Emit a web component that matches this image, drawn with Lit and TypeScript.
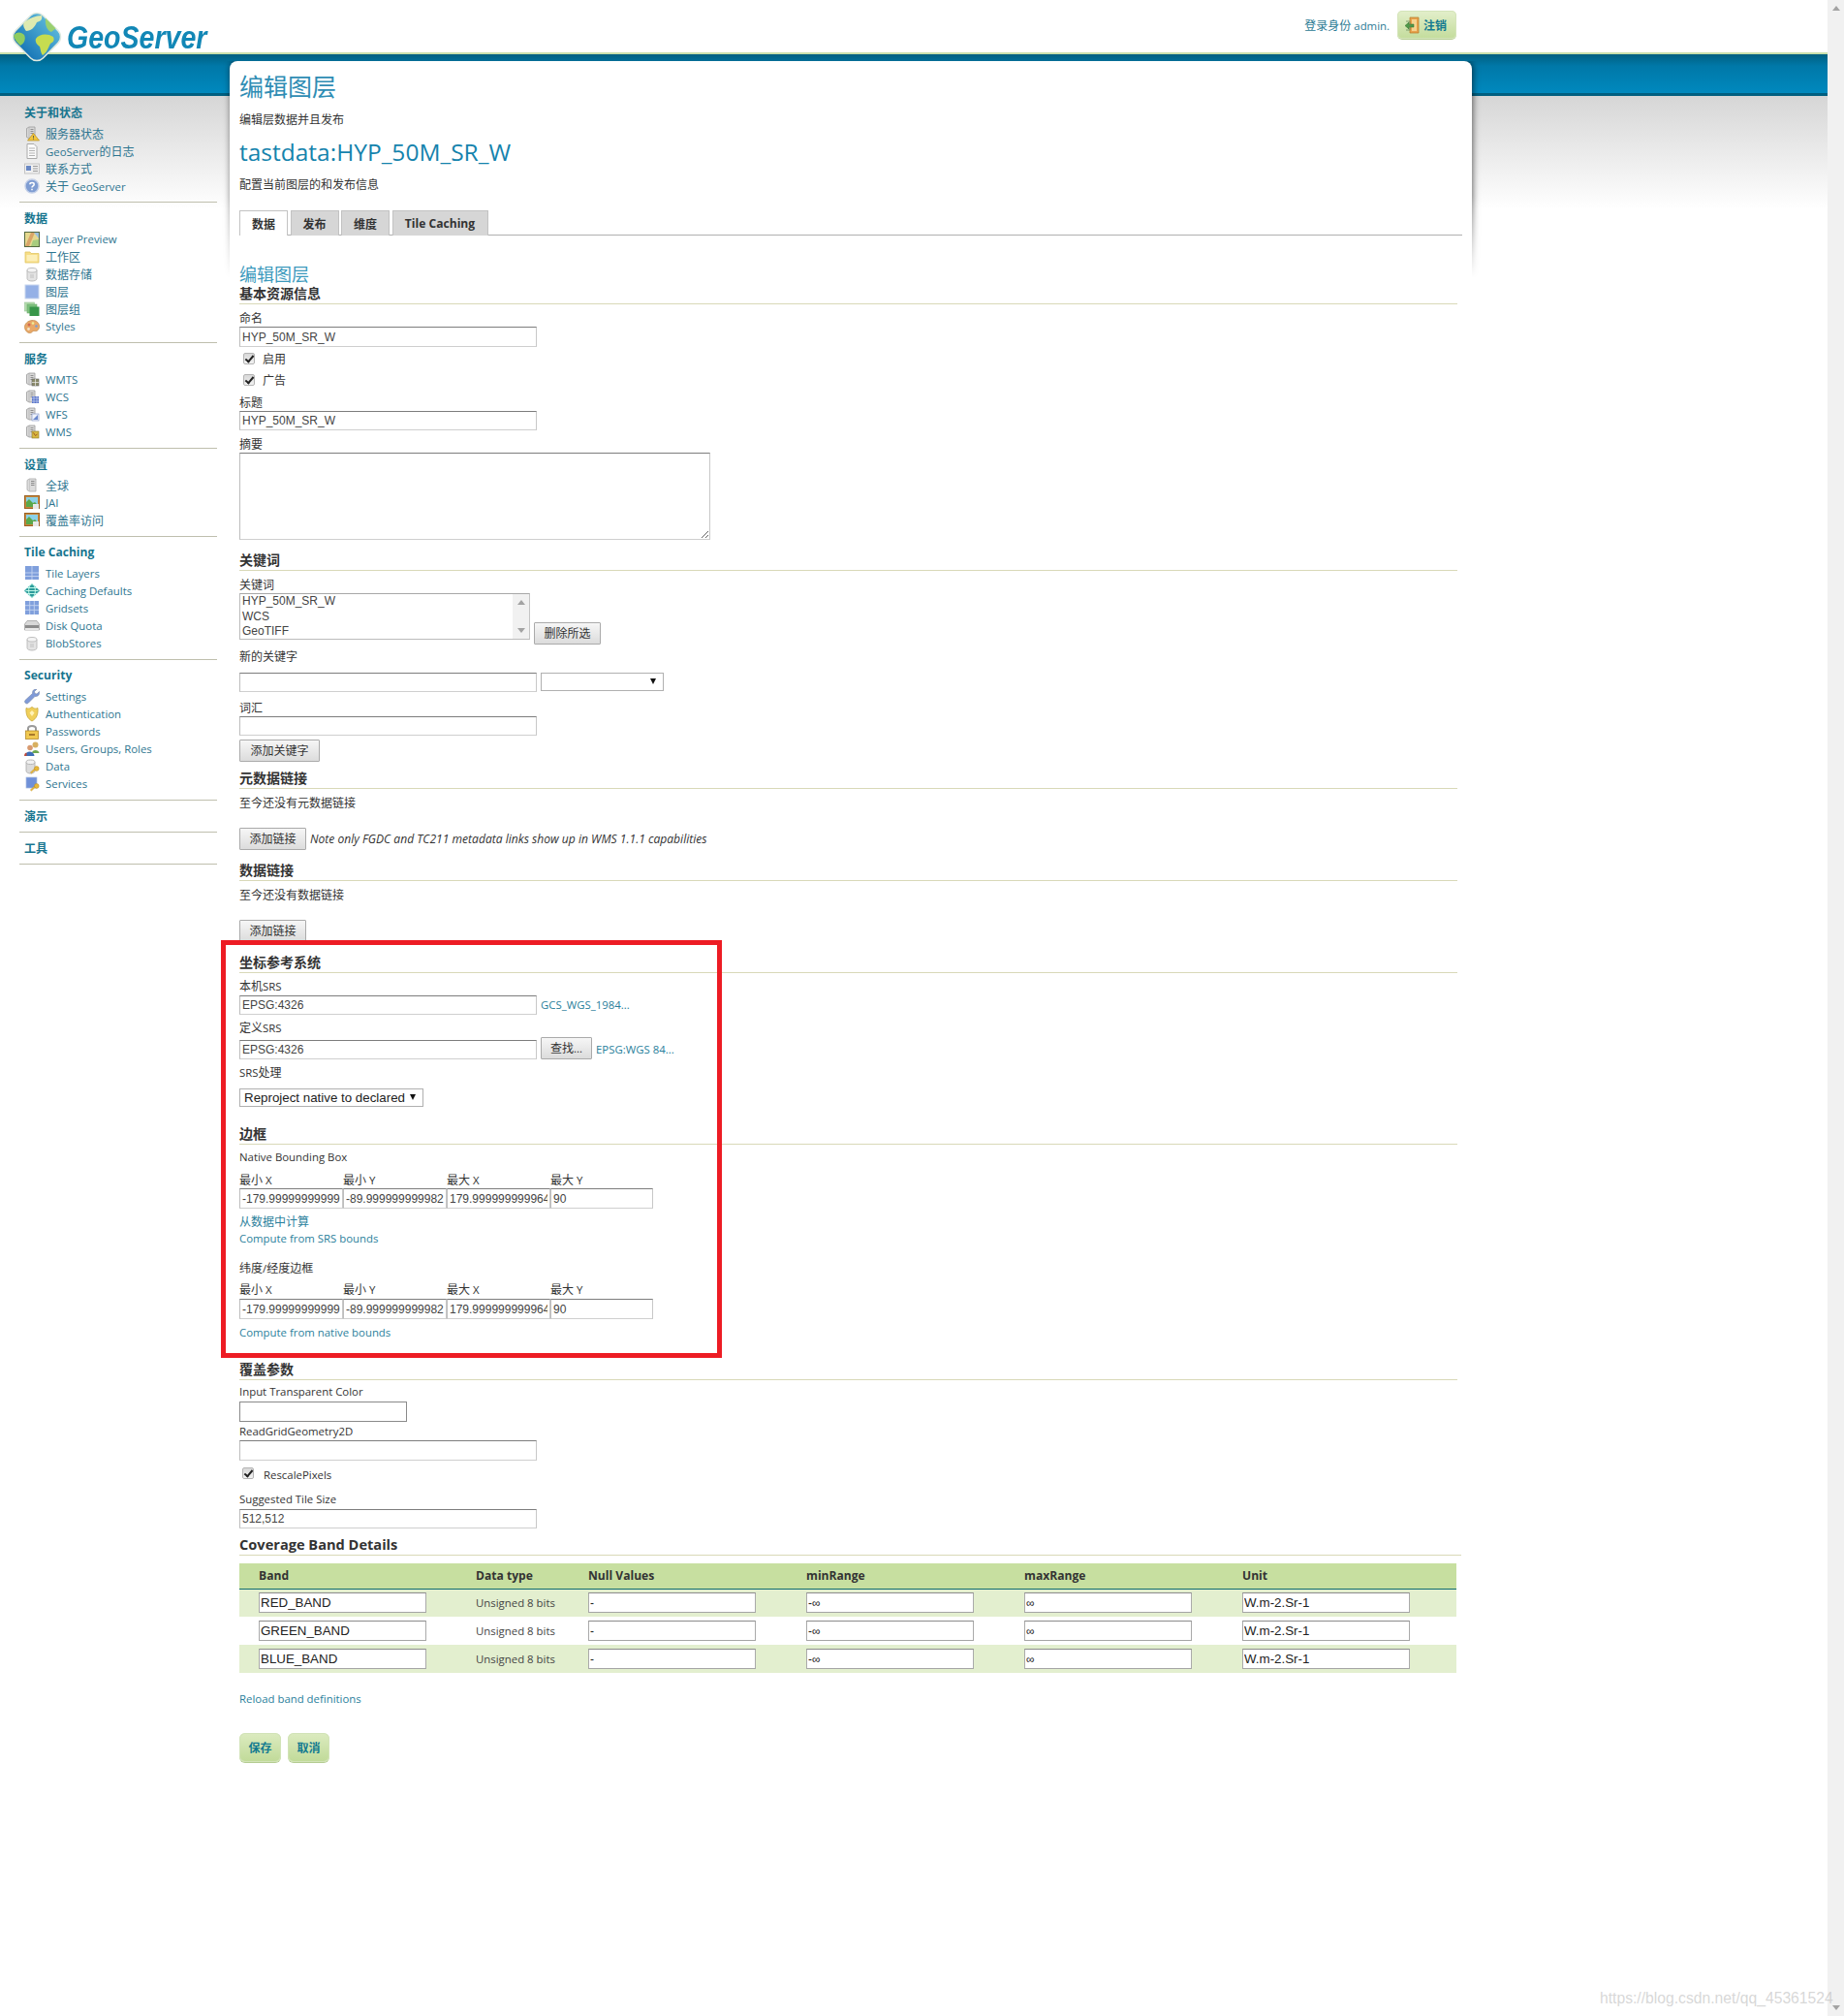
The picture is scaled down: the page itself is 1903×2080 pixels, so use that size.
import { LitElement, html, css, svg, TemplateResult } from "lit";
import { customElement } from "lit/decorators.js";

const t = (s: string) =>
  s.split(/([\u4e00-\u9fff]+)/).map((p, i) => (i % 2 ? html`<span class="zh">${p}</span>` : p));

const tower = svg`<path d="M2.5 2.5 5 1h6v12H5l-2.5-1.5z" fill="#d9d9d9" stroke="#9a9a9a" stroke-width=".8"/><path d="M5 1v12" stroke="#aaa" stroke-width=".6"/><path d="M6.5 3.5h3M6.5 5.5h3M6.5 7.5h3" stroke="#888" stroke-width=".9"/>`;
const cyl = svg`<path d="M3 4v8.5c0 1.6 2.4 2.5 5 2.5s5-.9 5-2.5V4z" fill="#e4e4e4" stroke="#b0b0b0" stroke-width=".8"/><ellipse cx="8" cy="3.8" rx="5" ry="2.3" fill="#f4f4f4" stroke="#b0b0b0" stroke-width=".8"/><path d="M6 8h4v4H6z" fill="#d2d2d2"/>`;
const key = svg`<circle cx="12.8" cy="10" r="2.4" fill="#e8b838" stroke="#b88a20" stroke-width=".5"/><path d="M11.2 11.4 7.5 15l-1.2-1 3.7-3.5z" fill="#e8b838" stroke="#b88a20" stroke-width=".4"/>`;
const picture = svg`<rect x=".5" y=".5" width="15" height="13" fill="#c8873a" stroke="#9a6224"/><rect x="2" y="2" width="12" height="10" fill="#8ad0e8"/><path d="M2 12V7l3-3 4 4 2-1 3 3v2z" fill="#5aa84a"/><path d="M9 9h6v5H9z" fill="#e8e8e8"/>`;

const icons: Record<string, unknown> = {
  status: svg`${tower}<path d="M9.5 7.5 15.5 15h-12z" fill="#f2c53c" stroke="#b78f1c" stroke-width=".7"/><path d="M9.5 10v2.5M9.5 13.3v.8" stroke="#664" stroke-width="1"/>`,
  log: svg`<path d="M3 .5h7l3 3v12H3z" fill="#fbfbfb" stroke="#aaa"/><path d="M5 5h6M5 7.5h6M5 10h6M5 12.5h6" stroke="#aaa" stroke-width=".9"/>`,
  contact: svg`<rect x=".5" y="3" width="15" height="10" fill="#f0f0f0" stroke="#c4c4c4"/><rect x="2" y="5" width="5" height="5" fill="#6a88c4"/><path d="M9 5.500h5M9 8h5M9 10.500h5" stroke="#999"/>`,
  about: svg`<circle cx="8" cy="8" r="7" fill="#7f9dd2" stroke="#c4d0e8" stroke-width="1.400"/><path d="M5.800 6.200C6 4 10.200 4 10.200 6.200 10.200 7.800 8 7.800 8 9.500M8 10.800v1.500" fill="none" stroke="#fff" stroke-width="1.500"/>`,
  preview: svg`<rect x=".5" y=".5" width="15" height="15" fill="#e6d88e" stroke="#556a40"/><path d="M1 15 7 1h4l-6 14z" fill="#d9a468"/><path d="M10 1h5v6z" fill="#9cc0de"/><path d="M9 9l6-1v7H7z" fill="#a8cc7e"/>`,
  folder: svg`<path d="M1 3h5l1 1.500h8v9.500H1z" fill="#f7de86" stroke="#e2c664" stroke-width=".8"/><path d="M2.500 6h11v6.500h-11z" fill="#fcefb8"/>`,
  store: svg`${cyl}`,
  layer: svg`<rect x="1" y="1" width="14" height="14" fill="#94b0e6" stroke="#c8d6ee"/>`,
  group: svg`<rect x=".5" y="1" width="10" height="9" fill="#b4dcac" stroke="#98c498" stroke-width=".6"/><rect x="3" y="3" width="10" height="9" fill="#7cc07c" stroke="#70ac70" stroke-width=".6"/><rect x="5.500" y="5.500" width="10" height="9.500" fill="#38964a"/>`,
  styles: svg`<path d="M8 1.500C12.500 1 16 4.500 15.500 8.500 15 12 12.500 13 10.500 12.500 8.500 12 8.500 14 6.500 14.500 3 15 .5 11.500.5 8.500.5 5 3.500 2 8 1.500z" fill="#e8a868" stroke="#c08848" stroke-width=".7"/><circle cx="5" cy="6" r="1.500" fill="#d06a50"/><circle cx="9" cy="4.500" r="1.300" fill="#eeee99"/><circle cx="12.500" cy="7.500" r="1.300" fill="#7a9cd4"/><circle cx="4.500" cy="10.500" r="1.400" fill="#f2e3c8"/>`,
  wmts: svg`${tower}<rect x="8" y="7" width="7" height="7" fill="#8a8a6a" stroke="#666" stroke-width=".6"/><path d="M11.500 7v7M8 10.500h7" stroke="#eee" stroke-width=".7"/>`,
  wcs: svg`${tower}<rect x="8" y="7" width="7" height="7" fill="#5570c8"/><path d="M8 9h7M8 12h7M10 7v7M13 7v7" stroke="#c8d4f0" stroke-width=".7"/>`,
  wfs: svg`${tower}<rect x="8" y="7" width="7" height="7" fill="#eef2fa" stroke="#8a9ccc" stroke-width=".7"/><path d="M9 13l5-5v5z" fill="#6a88cc"/>`,
  wms: svg`${tower}<rect x="8" y="7" width="7" height="7" fill="#d8b840" stroke="#887828" stroke-width=".6"/><path d="M9.500 8.500l2 3 2-1.500" stroke="#a05a20" fill="none"/>`,
  global: svg`<path d="M3 2.500 5.500 1H12v13H5.500L3 12.500z" fill="#dcdcdc" stroke="#aaa" stroke-width=".8"/><path d="M5.500 1v13" stroke="#bbb" stroke-width=".6"/><path d="M7 3.500h3.500M7 5.500h3.500M7 7.500h3.500" stroke="#888"/>`,
  pic: picture,
  tiles: svg`<rect x="1" y="0" width="14" height="14" fill="#7f9fdc"/><path d="M8 0v14M1 7h14M1 10.500h14" stroke="#c4d4f0" stroke-width=".9"/>`,
  globe: svg`<path d="M8 0 16 7.500 8 15 0 7.500z" fill="#2a9a9a" stroke="#8cc" stroke-width=".4"/><ellipse cx="8" cy="7.500" rx="3.400" ry="6.800" fill="none" stroke="#cfe" stroke-width=".9"/><path d="M1.500 7.500h13M3 4.500h10M3 10.500h10" stroke="#cfe" stroke-width=".9"/>`,
  grid: svg`<rect x="1" y="0" width="14" height="14" fill="#7f9fdc"/><path d="M5.700 0v14M10.300 0v14M1 4.700h14M1 9.300h14" stroke="#c4d4f0" stroke-width=".9"/>`,
  disk: svg`<path d="M.5 6 3 2.500h10L15.500 6v6h-15z" fill="#d8d8d8" stroke="#999" stroke-width=".7"/><path d="M1 7h14v3H1z" fill="#8c8c8c"/><path d="M1 10h14v2H1z" fill="#e8e8e8"/>`,
  blob: svg`${cyl}`,
  wrench: svg`<path d="M15.500 2.500 13 5l-2-.500L10.500 2.500 13 0C10.500-.5 8.200 1.200 8.500 4.500L1 11.500C-.5 13.500 2 16 4 14.500L11 7.500C14.500 8 16.200 5 15.500 2.500z" fill="#7f9ad8" stroke="#7a8aa8" stroke-width=".6"/>`,
  shield: svg`<path d="M2 1.500C5 3 6 1.500 8 .5c2 1 3 2.500 6 1 .5 7-1.500 11-6 13.500C3.500 12.500 1.500 8.500 2 1.500z" fill="#f0cf5a" stroke="#c8a83c" stroke-width=".8"/><path d="M8 4 10.500 6.500 8 10 5.500 6.500z" fill="#fff2b8"/>`,
  lock: svg`<path d="M4 7V4.500C4 1 12 1 12 4.500V7" fill="none" stroke="#9a9a9a" stroke-width="2"/><rect x="1.500" y="7" width="13" height="8.500" fill="#f0c850" stroke="#b58a2a" stroke-width=".8"/><rect x="5" y="10" width="6" height="2" fill="#a8782a"/>`,
  users: svg`<circle cx="11.500" cy="3.500" r="3" fill="#d8b060"/><path d="M8 12c0-4 7-4 7.500 0z" fill="#70a850"/><circle cx="6" cy="6.500" r="2.800" fill="#d89a70"/><path d="M1 15c0-6 9-6 9.500 0z" fill="#3e6fb8"/><path d="M0 15c0-2.500 1.500-3.500 2.500-3.500V15z" fill="#c04a3a"/>`,
  datakey: svg`<path d="M2 3.500v9c0 1.500 2.400 2.500 4.500 2.500s4.500-1 4.500-2.500v-9z" fill="#dcdcdc" stroke="#a8a8a8" stroke-width=".8"/><ellipse cx="6.500" cy="3.300" rx="4.500" ry="2.300" fill="#f1f1f1" stroke="#a8a8a8" stroke-width=".8"/>${key}`,
  servicekey: svg`<rect x="2" y="1" width="11" height="11" fill="#6f90d8" stroke="#a8bce0" stroke-width=".7"/>${key}`,
};

const icon = (name: string) => html`<svg class="ico" viewBox="0 0 16 16" aria-hidden="true">${icons[name]}</svg>`;

const NAV: { title: string; items: [string, string][] }[] = [
  { title: "关于和状态", items: [["status", "服务器状态"], ["log", "GeoServer的日志"], ["contact", "联系方式"], ["about", "关于 GeoServer"]] },
  { title: "数据", items: [["preview", "Layer Preview"], ["folder", "工作区"], ["store", "数据存储"], ["layer", "图层"], ["group", "图层组"], ["styles", "Styles"]] },
  { title: "服务", items: [["wmts", "WMTS"], ["wcs", "WCS"], ["wfs", "WFS"], ["wms", "WMS"]] },
  { title: "设置", items: [["global", "全球"], ["pic", "JAI"], ["pic", "覆盖率访问"]] },
  { title: "Tile Caching", items: [["tiles", "Tile Layers"], ["globe", "Caching Defaults"], ["grid", "Gridsets"], ["disk", "Disk Quota"], ["blob", "BlobStores"]] },
  { title: "Security", items: [["wrench", "Settings"], ["shield", "Authentication"], ["lock", "Passwords"], ["users", "Users, Groups, Roles"], ["datakey", "Data"], ["servicekey", "Services"]] },
  { title: "演示", items: [] },
  { title: "工具", items: [] },
];

const BANDS = ["RED_BAND", "GREEN_BAND", "BLUE_BAND"];

@customElement("app-root")
export class AppRoot extends LitElement {
  static styles = css`
    :host { display: block; width: 1903px; height: 2080px; overflow: hidden; background: #fff; color: #333;
      font-family: "Open Sans", "Noto Sans CJK SC", sans-serif; font-size: 11.400px; line-height: 14px; }
    * { box-sizing: border-box; }
    .zh { font-family: "Noto Sans CJK SC", sans-serif; font-size: 12px; }
    .root { display: flex; height: 2080px; position: relative; }
    .page { flex: 1; min-width: 0; }
    .scrollbar { width: 17px; background: #f1f1f1; display: flex; flex-direction: column; justify-content: space-between; align-items: center; padding: 6px 0; }
    .arrow-up, .arrow-down { width: 0; height: 0; border-left: 4px solid transparent; border-right: 4px solid transparent; }
    .arrow-up { border-bottom: 5px solid #a3a3a3; }
    .arrow-down { border-top: 5px solid #a3a3a3; }
    .watermark { position: absolute; left: 1651px; top: 2053px; font: 15.700px/18px "Liberation Sans", sans-serif; color: rgba(175,175,175,.5); white-space: nowrap; }

    header { height: 56px; border-bottom: 2px solid #c9dfab; display: flex; justify-content: space-between; align-items: flex-start; position: relative; background: #fff; }
    .globe { position: absolute; left: 11px; top: 11px; width: 54px; height: 54px; z-index: 2; }
    .brand { margin: 22px 0 0 69px; font: italic bold 34px/32px "Liberation Sans", sans-serif; color: #1287b6; transform: scaleX(.84); transform-origin: left center; }
    .user { display: flex; align-items: flex-start; gap: 8px; margin: 11px 383px 0 0; color: #2b7a94; }
    .user > span { line-height: 29px; }
    .logout { width: 61px; height: 29px; display: flex; align-items: center; gap: 4px; padding: 1px 0 0 7px; border-radius: 5px; background: linear-gradient(#e3efcb, #c3dc9c); box-shadow: 0 1px 0 #b8cf96, inset 0 0 0 1px #d4e4ba; color: #127a90; font-weight: bold; }
    .logout svg { width: 16px; height: 18px; }

    .body { display: flex; min-height: 2024px;
      background:
        linear-gradient(#005f80 0, #0078a8 12px, #0089be 40px, #005f80 40px, #005f80 43px, transparent 43px) no-repeat,
        linear-gradient(#d6d6d6 43px, #ffffff 160px) no-repeat; }

    nav { width: 237px; flex: none; padding: 44px 13px 0 20px; }
    .sec { padding-top: 9px; padding-bottom: 7px; border-bottom: 1px solid #bfbfae; }
    .sec.bare { padding-bottom: 9px; }
    .sec h4 { margin: 0; padding-left: 5px; height: 14px; font-size: 12.100px; line-height: 14px; font-weight: bold; color: #17758f; }
    .sec ul { list-style: none; margin: 6px 0 0; padding: 0 0 0 5px; }
    .sec li { height: 18px; display: flex; align-items: center; gap: 6px; color: #2e7590; white-space: nowrap; }
    .ico { width: 16px; height: 16px; flex: none; }

    main { flex: 1; position: relative; margin-top: 7px; max-width: 1282px; }
    .cardfade { position: absolute; left: -12px; right: -12px; top: 0; height: 224px; overflow: hidden; -webkit-mask-image: linear-gradient(#000 62%, transparent); mask-image: linear-gradient(#000 62%, transparent); }
    .cardfade div { position: absolute; left: 12px; right: 12px; top: 0; bottom: -20px; background: #fff; border-radius: 8px 8px 0 0; box-shadow: 1px 0 7px rgba(0,0,0,.6); }
    .content { position: relative; padding: 11px 10px 0; }
    .redbox { position: absolute; left: -9px; top: 907px; width: 517px; height: 431px; border: 5px solid #ed1c24; pointer-events: none; }

    h1 { margin: 0; height: 30px; font: normal 25px/28px "Noto Sans CJK SC", sans-serif; color: #2f8db4; }
    h1 .zh, h2.edit .zh { font-size: inherit; }
    h2.layer { margin: 12px 0 0; font: normal 24.500px/30px "Open Sans", sans-serif; color: #1583ad; }
    h2.edit { margin: 29px 0 0; height: 22px; font: normal 18px/20px "Noto Sans CJK SC", sans-serif; color: #3c9abd; }
    .tabs { display: flex; gap: 2.500px; height: 26px; border-bottom: 1px solid #b0b0b0; }
    .tab { height: 26px; display: flex; align-items: center; justify-content: center; width: 50px; font-size: 12.100px; background: #d6d6d6; border: 1px solid #c2c2c2; border-bottom: 0; font-weight: bold; color: #333; }
    .tab.on { background: #fff; height: 26px; position: relative; }
    .tab.wide { width: 99px; }

    h3 { margin: 0; width: 1257px; height: 19px; line-height: 15px; border-bottom: 1px solid #d9d9b8; font-weight: bold; font-size: 14.600px; color: #333; }
    h3 .zh { font-size: 14px; }
    h3.full { width: 1261px; }
    .lab { height: 14px; line-height: 14px; color: #333; }
    .lab.it { font-style: italic; font-size: 12.100px; }
    a { color: #2b7f9c; text-decoration: none; height: 14px; line-height: 14px; display: block; }

    input.tx { display: block; width: 307px; height: 21px; padding: 0 2px; border: 1px solid; border-color: #7d7d7d #c8c8c8 #cfcfcf #bdbdbd; background: #fff; font: 12px "Liberation Sans", sans-serif; color: #444; outline: none; }
    input.h20 { height: 20px; }
    input.w173 { width: 173px; border-color: #8a8a8a; }
    input.cell { width: 100%; }
    textarea { display: block; width: 486px; height: 90px; padding: 2px; border: 1px solid; border-color: #7d7d7d #c8c8c8 #cfcfcf #bdbdbd; outline: none; background: #fff; }
    .check { display: flex; align-items: center; height: 16px; padding-left: 4px; gap: 8px; }
    .check input { appearance: none; -webkit-appearance: none; flex: none; margin: 0; width: 12px; height: 12px; border: 1px solid #b4b4b4; border-radius: 2px; background: linear-gradient(#d8d8d8, #f2f2f2); position: relative; }
    .check input::after { content: ""; position: absolute; left: 3px; top: 0; width: 3px; height: 7px; border: solid #222; border-width: 0 2px 2px 0; transform: rotate(40deg); }
    .check.up { height: 18px; padding-left: 3px; gap: 10px; }
    .check.up input { margin-top: -5px; }

    .btn { display: block; flex: none; height: 23px; padding: 0; border: 1px solid #aaa; border-radius: 1px; background: linear-gradient(#f6f6f6, #dcdcdc); color: #333; font-family: inherit; font-size: 11.400px; line-height: 20px; }
    .w69 { width: 69px; }
    .w83 { width: 83px; }
    .w53 { width: 53px; }
    .row { display: flex; }
    .row.c { align-items: center; gap: 4px; }
    .row.e { align-items: flex-end; gap: 4px; }
    .row.e a { align-self: center; margin-top: 3px; }
    .kw { gap: 4px; height: 53px; }
    .list { width: 300px; height: 48px; display: flex; border: 1px solid; border-color: #a8a8a8 #c4c4c4 #bbb #bbb; font: 12px/15.500px "Liberation Sans", sans-serif; color: #444; }
    .list ol { list-style: none; margin: 0; padding: 0 0 0 2px; flex: 1; }
    .list .sb { width: 17px; background: #f1f1f1; display: flex; flex-direction: column; justify-content: space-between; align-items: center; padding: 6px 0; }
    .kw .btn { margin-top: 30px; }
    select { display: block; appearance: none; -webkit-appearance: none; height: 19px; border: 1px solid #b0b0b0; border-radius: 0; background: #fff; color: #222; font: 13.330px "Liberation Sans", sans-serif; padding: 0 0 0 4px; outline: none; }
    .selwrap { position: relative; flex: none; }
    .selwrap::after { content: ""; position: absolute; right: 8px; top: 6px; width: 0; height: 0; border-left: 3.500px solid transparent; border-right: 3.500px solid transparent; border-top: 6px solid #111; pointer-events: none; }
    .s127 { width: 127px; }
    .s190 { width: 190px; }
    .gap9 { gap: 4px; }
    .bbox { display: grid; grid-template-columns: 107px 107px 107px 106px; }

    table { border-collapse: collapse; table-layout: fixed; width: 1256px; }
    thead tr { background: #c7dfa0; }
    th { height: 26px; padding: 0; text-align: left; font-size: 12.100px; font-weight: bold; color: #333; border-bottom: 1px solid #0e6a6e; }
    td { height: 29px; padding: 0; color: #444; }
    tbody tr.odd { background: #e3efcf; }
    th:first-child, td:first-child { padding-left: 20px; }
    td input { display: block; width: 173px; height: 21px; padding: 0 1px; border: 1px solid; border-color: #8c8c8c #aaa #a5a5a5 #aaa; background: #fff; font: 13.330px "Liberation Sans", sans-serif; color: #222; outline: none; }
    td input.sm { font-size: 12px; }

    .actions { display: flex; gap: 7px; }
    .act { width: 43px; height: 30px; display: flex; align-items: center; justify-content: center; border-radius: 6px; background: linear-gradient(#dcebc0, #c0da98); box-shadow: 0 1px 0 #b4cc92, inset 0 0 0 1px #d2e3b8; color: #127a90; font-weight: bold; }

    .mt1 { margin-top: 1px; } .mt2 { margin-top: 2px; } .mt3 { margin-top: 3px; } .mt4 { margin-top: 4px; }
    .mt5 { margin-top: 5px; } .mt6 { margin-top: 6px; } .mt7 { margin-top: 7px; } .mt8 { margin-top: 8px; }
    .mt9 { margin-top: 9px; } .mt10 { margin-top: 10px; } .mt11 { margin-top: 11px; } .mt12 { margin-top: 12px; }
    .mt13 { margin-top: 13px; } .mt16 { margin-top: 16px; } .mt19 { margin-top: 19px; } .mt20 { margin-top: 20px; }
    .mt23 { margin-top: 23px; } .mt28 { margin-top: 28px; }
  `;

  private bbox(first: string, gap: string) {
    return html`
      <div class="bbox ${first}">
        ${["最小 X", "最小 Y", "最大 X", "最大 Y"].map((l) => html`<div class="lab">${t(l)}</div>`)}
      </div>
      <div class="bbox ${gap}">
        ${["-179.999999999996", "-89.999999999982", "179.999999999964", "90"].map(
          (v) => html`<input class="tx cell" .value=${v} />`
        )}
      </div>`;
  }

  private checkbox(label: string, cls: string) {
    return html`<label class="check ${cls}"><input type="checkbox" checked />${t(label)}</label>`;
  }

  render(): TemplateResult {
    return html`
      <div class="root">
        <div class="page">
          <header>
            <svg class="globe" viewBox="0 0 54 54" aria-hidden="true">
              <defs>
                <linearGradient id="oc" x1="0" y1="0" x2="0" y2="1"><stop offset="0" stop-color="#58b4d8" /><stop offset="1" stop-color="#1a78b8" /></linearGradient>
                <clipPath id="gc"><rect x="7" y="7" width="40" height="40" rx="9" transform="rotate(45 27 27)" /></clipPath>
              </defs>
              <rect x="7" y="7" width="40" height="40" rx="9" transform="rotate(45 27 27)" fill="url(#oc)" stroke="#dfe9df" stroke-width="1.500" />
              <g clip-path="url(#gc)">
                <path d="M14 12C19 8 26 5 32 5 33 9 31 11 27 12 25 17 21 21 16 21 14 18 12 15 14 12Z" fill="#dfeab0" />
                <path d="M26 29C29 24 38 23 44 27 46 31 43 33 41 34 39 38 37 44 33 46 31 44 31 40 30 37 27 35 25 32 26 29Z" fill="#c6dc50" />
                <path d="M3 26C6 21 11 22 14 25 16 29 14 34 10 36 7 33 4 30 3 26Z" fill="#8fcc60" />
                <path d="M36 7 47 18 42 22C39 21 35 17 36 7Z" fill="#9ad070" />
              </g>
            </svg>
            <div class="brand">GeoServer</div>
            <div class="user">
              <span>${t("登录身份 admin.")}</span>
              <div class="logout">
                <svg viewBox="0 0 16 18" aria-hidden="true"><path d="M6 1h9v16H6z" fill="#e8a24c" stroke="#b57826" stroke-width=".7" /><path d="M8 3h5v12H8z" fill="#f4d28e" /><path d="M1 9.500 5 6v2h5v3H5v2z" fill="#4f9a4a" stroke="#2f6a2c" stroke-width=".5" /><path d="M2 5h4v9H2" fill="none" stroke="#6a8a5a" stroke-width=".8" /></svg>
                ${t("注销")}
              </div>
            </div>
          </header>
          <div class="body">
            <nav>
              ${NAV.map(
                (s) => html`<section class="sec ${s.items.length ? "" : "bare"}">
                  <h4>${t(s.title)}</h4>
                  ${s.items.length
                    ? html`<ul>${s.items.map(([i, l]) => html`<li>${icon(i)}<span>${t(l)}</span></li>`)}</ul>`
                    : ""}
                </section>`
              )}
            </nav>
            <main>
              <div class="cardfade"><div></div></div>
              <div class="content">
                <h1>${t("编辑图层")}</h1>
                <div class="lab mt12">${t("编辑层数据并且发布")}</div>
                <h2 class="layer">tastdata:HYP_50M_SR_W</h2>
                <div class="lab mt11">${t("配置当前图层的和发布信息")}</div>
                <div class="tabs mt20">
                  <div class="tab on">${t("数据")}</div>
                  <div class="tab">${t("发布")}</div>
                  <div class="tab">${t("维度")}</div>
                  <div class="tab wide">Tile Caching</div>
                </div>
                <h2 class="edit">${t("编辑图层")}</h2>

                <h3 class="mt1">${t("基本资源信息")}</h3>
                <div class="lab mt7">${t("命名")}</div>
                <input class="tx mt2" value="HYP_50M_SR_W" />
                <div class="mt4">${this.checkbox("启用", "")}</div>
                <div class="mt6">${this.checkbox("广告", "")}</div>
                <div class="lab mt8">${t("标题")}</div>
                <input class="tx h20 mt2" value="HYP_50M_SR_W" />
                <div class="lab mt7">${t("摘要")}</div>
                <textarea class="mt2"></textarea>

                <h3 class="mt13">${t("关键词")}</h3>
                <div class="lab mt7">${t("关键词")}</div>
                <div class="row kw mt2">
                  <div class="list">
                    <ol><li>HYP_50M_SR_W</li><li>WCS</li><li>GeoTIFF</li></ol>
                    <div class="sb"><i class="arrow-up"></i><i class="arrow-down"></i></div>
                  </div>
                  <button class="btn w69">${t("删除所选")}</button>
                </div>
                <div class="lab mt5">${t("新的关键字")}</div>
                <div class="row gap9 mt10">
                  <input class="tx h20" />
                  <div class="selwrap"><select class="s127"><option></option></select></div>
                </div>
                <div class="lab mt9">${t("词汇")}</div>
                <input class="tx h20 mt2" />
                <button class="btn w83 mt4">${t("添加关键字")}</button>

                <h3 class="mt9">${t("元数据链接")}</h3>
                <div class="lab mt7">${t("至今还没有元数据链接")}</div>
                <div class="row c mt19">
                  <button class="btn w69">${t("添加链接")}</button>
                  <span class="lab it">Note only FGDC and TC211 metadata links show up in WMS 1.1.1 capabilities</span>
                </div>

                <h3 class="mt13">${t("数据链接")}</h3>
                <div class="lab mt7">${t("至今还没有数据链接")}</div>
                <button class="btn w69 mt19">${t("添加链接")}</button>

                <h3 class="mt13">${t("坐标参考系统")}</h3>
                <div class="lab mt6">${t("本机SRS")}</div>
                <div class="row c mt3">
                  <input class="tx h20" value="EPSG:4326" />
                  <a href="#">GCS_WGS_1984...</a>
                </div>
                <div class="lab mt6">${t("定义SRS")}</div>
                <div class="row e mt3">
                  <input class="tx h20" value="EPSG:4326" />
                  <button class="btn w53">${t("查找...")}</button>
                  <a href="#">EPSG:WGS 84...</a>
                </div>
                <div class="lab mt6">${t("SRS处理")}</div>
                <div class="selwrap mt10 s190">
                  <select class="s190"><option>Reproject native to declared</option></select>
                </div>

                <h3 class="mt20">${t("边框")}</h3>
                <div class="lab mt6">Native Bounding Box</div>
                ${this.bbox("mt9", "mt2")}
                <a class="mt6" href="#">${t("从数据中计算")}</a>
                <a class="mt4" href="#">Compute from SRS bounds</a>
                <div class="lab mt16">${t("纬度/经度边框")}</div>
                ${this.bbox("mt8", "mt3")}
                <a class="mt7" href="#">Compute from native bounds</a>

                <h3 class="mt23">${t("覆盖参数")}</h3>
                <div class="lab mt5">Input Transparent Color</div>
                <input class="tx w173 mt3" />
                <div class="lab mt3">ReadGridGeometry2D</div>
                <input class="tx mt2" />
                <div class="mt6">${this.checkbox("RescalePixels", "up")}</div>
                <div class="lab mt9">Suggested Tile Size</div>
                <input class="tx h20 mt3" value="512,512" />

                <h3 class="full mt9">Coverage Band Details</h3>
                <table class="mt8">
                  <colgroup><col style="width:244px" /><col style="width:116px" /><col style="width:225px" /><col style="width:225px" /><col style="width:225px" /><col /></colgroup>
                  <thead><tr><th>Band</th><th>Data type</th><th>Null Values</th><th>minRange</th><th>maxRange</th><th>Unit</th></tr></thead>
                  <tbody>
                    ${BANDS.map(
                      (b, i) => html`<tr class="${i % 2 ? "" : "odd"}">
                        <td><input .value=${b} /></td>
                        <td>Unsigned 8 bits</td>
                        <td><input class="sm" value="-" /></td>
                        <td><input class="sm" value="-∞" /></td>
                        <td><input class="sm" value="∞" /></td>
                        <td><input value="W.m-2.Sr-1" /></td>
                      </tr>`
                    )}
                  </tbody>
                </table>
                <a class="mt20" href="#">Reload band definitions</a>
                <div class="actions mt28">
                  <div class="act">${t("保存")}</div>
                  <div class="act">${t("取消")}</div>
                </div>
              </div>
              <div class="redbox"></div>
            </main>
          </div>
        </div>
        <div class="scrollbar"><i class="arrow-up"></i><i class="arrow-down"></i></div>
        <div class="watermark">https://blog.csdn.net/qq_45361524</div>
      </div>
    `;
  }
}
